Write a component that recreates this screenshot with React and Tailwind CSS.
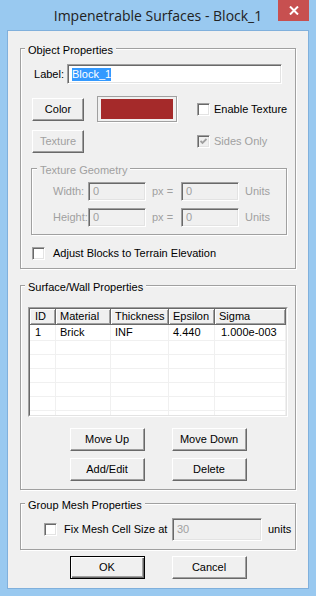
import React from "react";

const sunken =
  "border border-t-[#a0a0a0] border-l-[#a0a0a0] border-b-white border-r-white shadow-[inset_1px_1px_0_#696969,inset_-1px_-1px_0_#e3e3e3]";

function Btn({ children, disabled, def, className = "" }) {
  const style = def
    ? "border border-black shadow-[inset_1px_1px_0_#fff,inset_-1px_-1px_0_#696969,inset_-2px_-2px_0_#a0a0a0]"
    : "border border-t-white border-l-white border-b-[#696969] border-r-[#696969] shadow-[inset_-1px_-1px_0_#a0a0a0]";
  return (
    <div
      className={`flex shrink-0 items-center justify-center bg-[#f0f0f0] ${style} ${
        disabled ? "text-[#a0a0a0]" : "text-black"
      } ${className}`}
    >
      {children}
    </div>
  );
}

function Check({ checked, disabled }) {
  return (
    <div
      className={`flex h-[13px] w-[13px] shrink-0 items-center justify-center ${sunken} ${
        disabled ? "bg-[#f0f0f0]" : "bg-white"
      }`}
    >
      {checked && (
        <svg width="7" height="7" viewBox="0 0 7 7">
          <polyline
            points="0.5,3 2.5,5 6.5,1"
            fill="none"
            stroke={disabled ? "#a0a0a0" : "#000"}
            strokeWidth="1.8"
          />
        </svg>
      )}
    </div>
  );
}

function Group({ title, disabled, labelLeft = "left-[4px]", className = "", children }) {
  return (
    <div
      className={`relative flex shrink-0 flex-col border border-[#a0a0a0] shadow-[inset_1px_1px_0_#fff,1px_1px_0_#fff] ${className}`}
    >
      <span
        className={`absolute -top-[5px] ${labelLeft} bg-[#f0f0f0] px-[3px] leading-[13px] ${
          disabled ? "text-[#a0a0a0]" : "text-black"
        }`}
      >
        {title}
      </span>
      {children}
    </div>
  );
}

function Edit({ value, className = "" }) {
  return (
    <div className={`flex shrink-0 items-center bg-[#f0f0f0] pl-[4px] text-[#a0a0a0] ${sunken} ${className}`}>
      {value}
    </div>
  );
}

const cols = [
  { w: "w-[26px]", pl: "pl-[5px]", h: "ID", v: "1" },
  { w: "w-[55px]", pl: "pl-[4px]", h: "Material", v: "Brick" },
  { w: "w-[58px]", pl: "pl-[4px]", h: "Thickness", v: "INF" },
  { w: "w-[46px]", pl: "pl-[4px]", h: "Epsilon", v: "4.440" },
  { w: "w-[71px]", pl: "pl-[4px]", h: "Sigma", v: "1.000e-003" },
];

function Row({ first, data }) {
  return (
    <div className={`flex shrink-0 border-b border-[#f0f0f0] ${first ? "h-[16px]" : "h-[14px]"}`}>
      {cols.map((c, i) => (
        <div
          key={i}
          className={`${c.w} ${i === 4 ? "pl-[6px]" : c.pl} flex shrink-0 items-center border-r border-[#f0f0f0] whitespace-nowrap`}
        >
          {data ? c.v : ""}
        </div>
      ))}
    </div>
  );
}

export default function App() {
  return (
    <div className="flex h-[596px] w-[316px] flex-col bg-[#99c9f0] font-['Liberation_Sans',Arial,sans-serif] text-[11px] leading-[13px] text-black">
      {/* Title bar */}
      <div className="relative flex h-[30px] shrink-0 justify-center">
        <div className="mt-[6px] font-['Open_Sans',sans-serif] text-[14px] leading-[20px] text-[#222]">
          Impenetrable Surfaces - Block_1
        </div>
        <div className="absolute right-[7px] top-0 flex h-[21px] w-[31px] items-center justify-center bg-[#c75050]">
          <svg width="10" height="9" viewBox="0 0 10 9">
            <path d="M1 0.5 L9 8.5 M9 0.5 L1 8.5" stroke="#fff" strokeWidth="2" />
          </svg>
        </div>
      </div>

      {/* Client area */}
      <div className="mx-[7px] flex h-[559px] shrink-0 flex-col border border-[#80b0dc] bg-[#f0f0f0] px-[12px]">
        {/* Object Properties */}
        <Group title="Object Properties" className="mt-[17px] h-[221px]">
          <div className="mt-[15px] flex h-[20px] items-center">
            <div className="w-[46px] pr-[3px] text-right">Label:</div>
            <div className={`flex h-[20px] w-[215px] items-center bg-white pl-[4px] ${sunken}`}>
              <span className="bg-[#3399ff] leading-[13px] text-white">Block_1</span>
            </div>
          </div>

          <div className="mt-[12px] flex h-[26px] items-center">
            <Btn className="ml-[11px] h-[23px] w-[52px]">Color</Btn>
            <div className="ml-[13px] flex h-[26px] w-[80px] shrink-0 border border-[#a0a0a0] px-[3px] py-[2px] shadow-[1px_1px_0_#fff]">
              <div className="flex-1 bg-[#a52a2a]" />
            </div>
            <div className="ml-[20px]">
              <Check />
            </div>
            <span className="ml-[4px]">Enable Texture</span>
          </div>

          <div className="mt-[8px] flex h-[23px] items-center">
            <Btn disabled className="ml-[11px] h-[23px] w-[52px]">
              Texture
            </Btn>
            <div className="ml-[113px]">
              <Check checked disabled />
            </div>
            <span className="ml-[4px] text-[#a0a0a0]">Sides Only</span>
          </div>

          <Group
            title="Texture Geometry"
            disabled
            labelLeft="left-[5px]"
            className="ml-[10px] mt-[15px] h-[67px] w-[256px]"
          >
            <div className="mt-[13px] flex h-[19px] items-center text-[#a0a0a0]">
              <div className="w-[56px] shrink-0 pl-[21px]">Width:</div>
              <Edit value="0" className="h-[19px] w-[58px]" />
              <div className="w-[35px] shrink-0 pl-[6px]">px =</div>
              <Edit value="0" className="h-[19px] w-[58px]" />
              <div className="ml-[6px]">Units</div>
            </div>
            <div className="mt-[7px] flex h-[19px] items-center text-[#a0a0a0]">
              <div className="w-[56px] shrink-0 pl-[21px]">Height:</div>
              <Edit value="0" className="h-[19px] w-[58px]" />
              <div className="w-[35px] shrink-0 pl-[6px]">px =</div>
              <Edit value="0" className="h-[19px] w-[58px]" />
              <div className="ml-[6px]">Units</div>
            </div>
          </Group>

          <div className="mt-[12px] flex h-[13px] items-center">
            <div className="ml-[11px]">
              <Check />
            </div>
            <span className="ml-[8px]">Adjust Blocks to Terrain Elevation</span>
          </div>
        </Group>

        {/* Surface/Wall Properties */}
        <Group title="Surface/Wall Properties" className="mt-[16px] h-[205px]">
          <div className="ml-[7px] mt-[21px] h-[110px] w-[260px] shrink-0 border border-b-white border-l-[#a0a0a0] border-r-white border-t-[#a0a0a0]">
            <div className="flex h-full flex-col overflow-hidden border border-b-[#e3e3e3] border-l-[#696969] border-r-[#e3e3e3] border-t-[#696969] bg-white">
              <div className="flex h-[16px] shrink-0">
                {cols.map((c, i) => (
                  <div
                    key={i}
                    className={`${c.w} ${c.pl} flex shrink-0 items-center border-b border-r border-b-[#696969] border-r-[#696969] bg-[#f0f0f0] shadow-[inset_1px_1px_0_#fff,inset_-1px_-1px_0_#a0a0a0] whitespace-nowrap`}
                  >
                    {c.h}
                  </div>
                ))}
              </div>
              <Row first data />
              <Row />
              <Row />
              <Row />
              <Row />
              <Row />
              <Row />
            </div>
          </div>

          <div className="mt-[11px] flex justify-center gap-[27px]">
            <Btn className="h-[23px] w-[75px]">Move Up</Btn>
            <Btn className="h-[23px] w-[75px]">Move Down</Btn>
          </div>
          <div className="mt-[7px] flex justify-center gap-[27px]">
            <Btn className="h-[23px] w-[75px]">Add/Edit</Btn>
            <Btn className="h-[23px] w-[75px]">Delete</Btn>
          </div>
        </Group>

        {/* Group Mesh Properties */}
        <Group title="Group Mesh Properties" className="mt-[13px] h-[47px]">
          <div className="mt-[14px] flex h-[23px] items-center">
            <div className="ml-[23px]">
              <Check />
            </div>
            <div className="ml-[7px] w-[108px] shrink-0 whitespace-nowrap">Fix Mesh Cell Size at</div>
            <Edit value="30" className="h-[23px] w-[90px] text-[#8a8a8a]" />
            <div className="ml-[6px]">units</div>
          </div>
        </Group>

        <div className="mt-[6px] flex justify-center gap-[27px]">
          <Btn def className="h-[23px] w-[75px]">
            OK
          </Btn>
          <Btn className="h-[23px] w-[75px]">Cancel</Btn>
        </div>
      </div>
    </div>
  );
}
